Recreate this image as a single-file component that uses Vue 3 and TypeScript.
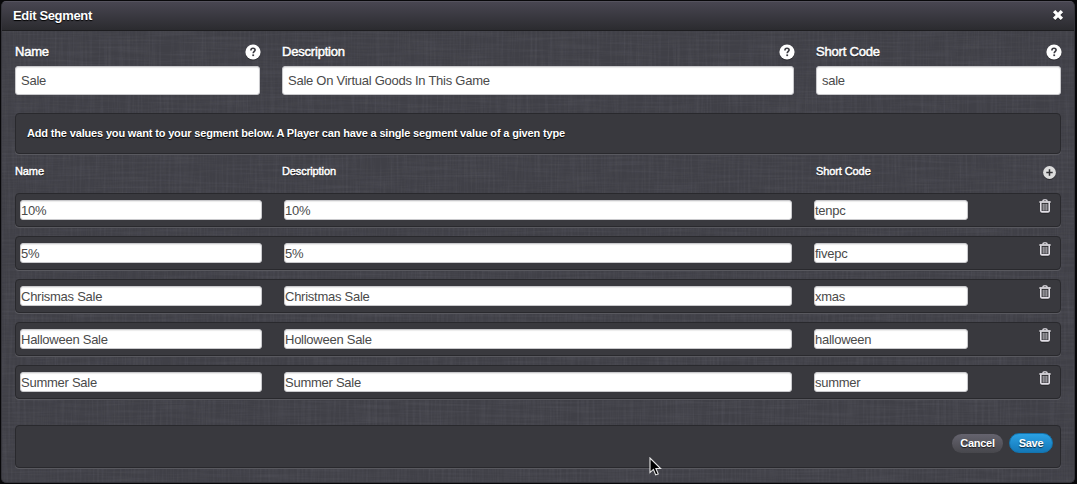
<script setup lang="ts">
import { reactive } from 'vue'

interface Entry {
  name: string
  description: string
  code: string
}

const segment = reactive<Entry>({
  name: 'Sale',
  description: 'Sale On Virtual Goods In This Game',
  code: 'sale',
})

const fields: { key: keyof Entry; label: string }[] = [
  { key: 'name', label: 'Name' },
  { key: 'description', label: 'Description' },
  { key: 'code', label: 'Short Code' },
]

const entries = reactive<Entry[]>([
  { name: '10%', description: '10%', code: 'tenpc' },
  { name: '5%', description: '5%', code: 'fivepc' },
  { name: 'Chrismas Sale', description: 'Christmas Sale', code: 'xmas' },
  { name: 'Halloween Sale', description: 'Holloween Sale', code: 'halloween' },
  { name: 'Summer Sale', description: 'Summer Sale', code: 'summer' },
])

function addEntry() {
  entries.push({ name: '', description: '', code: '' })
}

function removeEntry(index: number) {
  entries.splice(index, 1)
}
</script>

<template>
  <div class="page">
    <section class="modal" role="dialog" aria-label="Edit Segment">
      <svg class="linen" width="1073" height="452" aria-hidden="true">
        <filter id="weave-h" x="0" y="0" width="100%" height="100%">
          <feTurbulence type="fractalNoise" baseFrequency="0.02 0.45" numOctaves="2" seed="4" />
          <feColorMatrix values="0 0 0 0 0.85  0 0 0 0 0.85  0 0 0 0 1  1.1 0 0 0 -0.4" />
        </filter>
        <filter id="weave-v" x="0" y="0" width="100%" height="100%">
          <feTurbulence type="fractalNoise" baseFrequency="0.45 0.02" numOctaves="2" seed="9" />
          <feColorMatrix values="0 0 0 0 0.85  0 0 0 0 0.85  0 0 0 0 1  1.1 0 0 0 -0.4" />
        </filter>
        <rect width="100%" height="100%" filter="url(#weave-h)" opacity="0.08" />
        <rect width="100%" height="100%" filter="url(#weave-v)" opacity="0.08" />
      </svg>

      <header class="titlebar">
        <h1>Edit Segment</h1>
        <button class="icon-btn" aria-label="Close">
          <svg width="12" height="12" viewBox="0 0 12 12">
            <path d="M2.1 2.1 9.9 9.9M9.9 2.1 2.1 9.9" stroke="#fff" stroke-width="3.4" />
          </svg>
        </button>
      </header>

      <div class="body">
        <div class="fields">
          <div v-for="f in fields" :key="f.key" class="field">
            <div class="field-head">
              <label :for="f.key">{{ f.label }}</label>
              <svg width="16" height="16" viewBox="0 0 16 16">
                <circle cx="8" cy="8" r="7.6" fill="#fff" />
                <path d="M5.9 6.4C5.9 4.9 6.8 4.3 8 4.3s2.1.7 2.1 1.8c0 1.3-1.9 1.5-1.9 3.2" fill="none" stroke="#3a3a40" stroke-width="1.6" />
                <rect x="7.3" y="10.4" width="1.8" height="1.7" fill="#3a3a40" />
              </svg>
            </div>
            <input :id="f.key" v-model="segment[f.key]" class="input" type="text" spellcheck="false" />
          </div>
        </div>

        <div class="well notice">
          <span>Add the values you want to your segment below. A Player can have a single segment value of a given type</span>
        </div>

        <div class="columns">
          <span v-for="f in fields" :key="f.key">{{ f.label }}</span>
          <button class="icon-btn add" aria-label="Add value" @click="addEntry">
            <svg width="13" height="13" viewBox="0 0 13 13">
              <circle cx="6.5" cy="6.5" r="6.4" fill="#dcdcdc" />
              <path d="M6.5 3.3v6.4M3.3 6.5h6.4" stroke="#303034" stroke-width="1.5" />
            </svg>
          </button>
        </div>

        <div class="rows">
          <div v-for="(e, i) in entries" :key="i" class="well row">
            <input v-for="f in fields" :key="f.key" v-model="e[f.key]" class="cell" type="text" spellcheck="false" :aria-label="f.label" />
            <button class="icon-btn trash" aria-label="Delete value" @click="removeEntry(i)">
              <svg width="12" height="14" viewBox="0 0 12 14" fill="none" stroke="#e2dfe6">
                <path d="M.4 3h11.2" stroke-width="1.7" />
                <path d="M3.9 2.5V1.9Q3.9.9 5 .9h2Q8.1.9 8.1 1.9v.6" stroke-width="1.3" />
                <path d="M1.8 3.6v8.1q0 1.2 1.2 1.2h6q1.2 0 1.2-1.2V3.6" stroke-width="1.6" />
                <path d="M4.2 4.8v6.8M6 4.8v6.8M7.8 4.8v6.8" stroke-width=".8" />
              </svg>
            </button>
          </div>
        </div>

        <footer class="well actions">
          <button class="btn cancel">Cancel</button>
          <button class="btn save">Save</button>
        </footer>
      </div>
    </section>

    <svg class="cursor" width="13" height="20" viewBox="0 0 13 20" aria-hidden="true">
      <path d="M1 1v14.6l3.4-3.2 2.3 5.5 2.5-1-2.3-5.4h4.7z" fill="#000" stroke="#e8e8e8" stroke-width="1.1" />
    </svg>
  </div>
</template>

<style>
body {
  background: #050506;
}
</style>

<style scoped>
.page {
  position: relative;
  box-sizing: border-box;
  width: 1077px;
  height: 484px;
  padding: 1px 0 0 1px;
  overflow: hidden;
  background: #08080a;
  font-family: "Liberation Sans", Arial, sans-serif;
  color: #fff;
}
.modal {
  position: relative;
  box-sizing: border-box;
  width: 1074px;
  height: 482px;
  border: 1px solid #34343a;
  border-top-color: #55535e;
  border-radius: 5px;
  background: #404047;
  overflow: hidden;
}
.linen {
  position: absolute;
  left: 0;
  top: 29px;
}
.titlebar {
  position: relative;
  display: flex;
  align-items: center;
  justify-content: space-between;
  box-sizing: border-box;
  height: 29px;
  padding: 0 10px 2px 11px;
  border-bottom: 1px solid #1d1d20;
  background: linear-gradient(#484651, #2b2b2f);
}
h1 {
  position: relative;
  top: 1px;
  margin: 0;
  font-size: 13px;
  line-height: 16px;
  font-weight: bold;
  letter-spacing: -0.35px;
  text-shadow: 0 1px 1px #000;
}
.icon-btn {
  display: block;
  padding: 0;
  border: 0;
  background: none;
  line-height: 0;
}
.icon-btn svg,
.field-head svg {
  display: block;
  filter: drop-shadow(0 1px 0 rgba(0, 0, 0, 0.35));
}
.body {
  position: relative;
  padding: 13px 13px 0;
}
.fields {
  display: grid;
  grid-template-columns: 245px 512px 245px;
  gap: 22px;
}
.field-head {
  display: flex;
  justify-content: space-between;
  align-items: center;
  height: 16px;
  margin-bottom: 6px;
}
.field-head svg {
  margin-right: -1px;
}
.field-head label {
  font-size: 13px;
  line-height: 16px;
  letter-spacing: -0.2px;
  -webkit-text-stroke: 0.5px #fff;
  text-shadow: 0 1px 1px rgba(0, 0, 0, 0.7);
}
.input,
.cell {
  box-sizing: border-box;
  border: 1px solid #c9c9cc;
  border-radius: 3px;
  background: #fff;
  color: #4a4a4a;
  font-family: inherit;
  font-size: 13px;
  letter-spacing: -0.26px;
  outline: 0;
  box-shadow: inset 0 1px 1px rgba(0, 0, 0, 0.08);
}
.input {
  display: block;
  width: 100%;
  height: 29px;
  padding: 0 5px;
}
.well {
  box-sizing: border-box;
  border: 1px solid #29292d;
  border-radius: 4px;
  background: #39393e;
  box-shadow: 0 1px 0 #59595f;
}
.notice {
  display: flex;
  align-items: center;
  height: 41px;
  margin-top: 18px;
  padding: 0 11px 1px;
  font-size: 11px;
  font-weight: bold;
  letter-spacing: -0.16px;
  text-shadow: 0 1px 1px #000;
  white-space: nowrap;
}
.columns {
  display: grid;
  grid-template-columns: 245px 512px 1fr 13px;
  column-gap: 22px;
  height: 39px;
  padding: 10px 5px 0 0;
  box-sizing: border-box;
  font-size: 11px;
  line-height: 14px;
  letter-spacing: -0.1px;
  -webkit-text-stroke: 0.45px #fff;
  text-shadow: 0 1px 1px rgba(0, 0, 0, 0.7);
}
.add {
  height: 13px;
  margin-top: 2px;
}
.rows {
  display: grid;
  gap: 9px;
}
.row {
  display: grid;
  grid-template-columns: 242px 508px 154px 1fr;
  column-gap: 22px;
  height: 34px;
  padding: 6px 9px 0 4px;
}
.cell {
  height: 20px;
  padding: 0;
}
.trash {
  justify-self: end;
  height: 14px;
  margin-top: -1px;
}
.actions {
  display: flex;
  justify-content: flex-end;
  align-items: flex-start;
  gap: 6px;
  height: 43px;
  margin-top: 26px;
  padding: 7px 7px 0 0;
}
.btn {
  box-sizing: border-box;
  padding: 0;
  border: 0;
  border-radius: 10px;
  color: #fff;
  font: bold 11px/18px "Liberation Sans", Arial, sans-serif;
  letter-spacing: -0.25px;
  text-shadow: 0 1px 1px rgba(0, 0, 0, 0.7);
}
.cancel {
  width: 51px;
  height: 19px;
  margin-top: 1px;
  padding-bottom: 2px;
  background: linear-gradient(#65636e, #47474c);
}
.save {
  width: 44px;
  height: 20px;
  border: 1px solid #1374ae;
  background: linear-gradient(#2ba1e4, #1478b8);
}
.cursor {
  position: absolute;
  left: 649px;
  top: 457px;
}
</style>
